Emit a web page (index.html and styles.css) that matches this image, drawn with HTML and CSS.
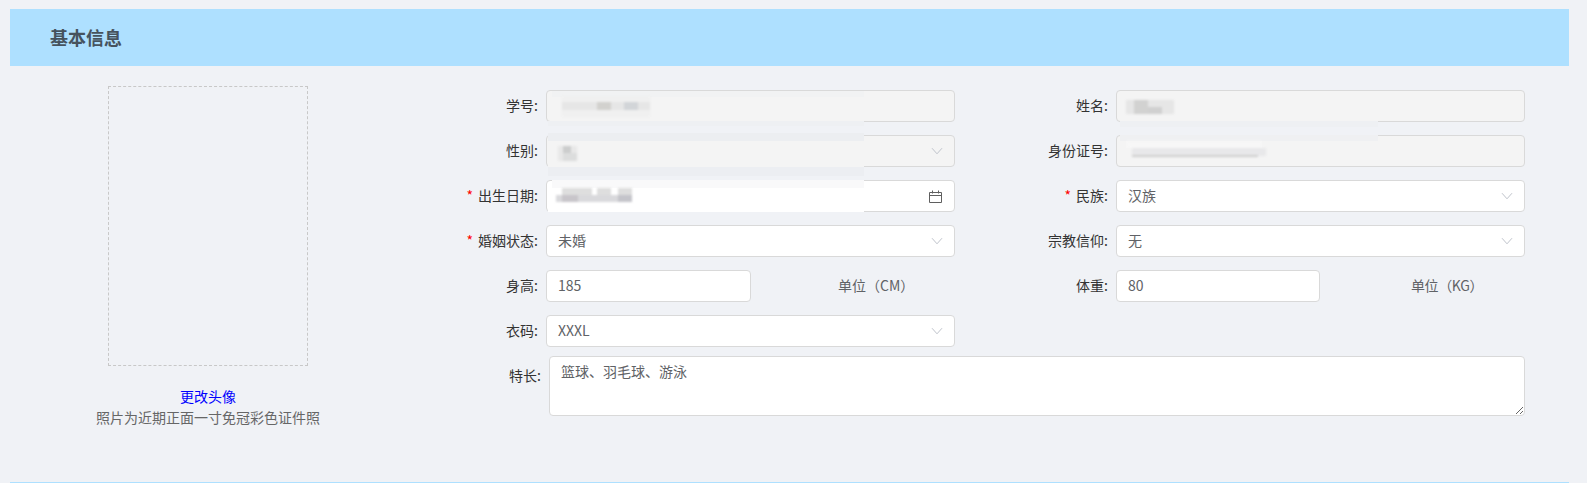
FILE: index.html
```html
<!DOCTYPE html>
<html lang="zh-CN">
<head>
<meta charset="utf-8">
<title>基本信息</title>
<link rel="stylesheet" href="styles.css">
</head>
<body>
<section class="panel">
  <h2 class="panel-title">基本信息</h2>
  <div class="panel-body">
    <aside class="photo-col">
      <div class="photo-box"></div>
      <a class="photo-link">更改头像</a>
      <p class="photo-note">照片为近期正面一寸免冠彩色证件照</p>
    </aside>
    <form class="form">
      <div class="row">
        <div class="field"><label class="label">学号:</label><div class="control disabled"></div></div>
        <div class="field"><label class="label">姓名:</label><div class="control disabled"></div></div>
      </div>
      <div class="row">
        <div class="field"><label class="label">性别:</label><div class="control disabled"><svg class="chev" viewBox="0 0 12 8"><path d="M1 1.2 6 6.8 11 1.2"/></svg></div></div>
        <div class="field"><label class="label">身份证号:</label><div class="control disabled"></div></div>
      </div>
      <div class="row">
        <div class="field"><label class="label"><span class="req">*</span>出生日期:</label><div class="control"><svg class="cal" viewBox="0 0 13 13"><path d="M.5 2.5h12v10H.5zM.5 5.5h12M3.5.5v3M9.5.5v3"/></svg></div></div>
        <div class="field"><label class="label"><span class="req">*</span>民族:</label><div class="control"><span class="value">汉族</span><svg class="chev" viewBox="0 0 12 8"><path d="M1 1.2 6 6.8 11 1.2"/></svg></div></div>
      </div>
      <div class="row">
        <div class="field"><label class="label"><span class="req">*</span>婚姻状态:</label><div class="control"><span class="value">未婚</span><svg class="chev" viewBox="0 0 12 8"><path d="M1 1.2 6 6.8 11 1.2"/></svg></div></div>
        <div class="field"><label class="label">宗教信仰:</label><div class="control"><span class="value">无</span><svg class="chev" viewBox="0 0 12 8"><path d="M1 1.2 6 6.8 11 1.2"/></svg></div></div>
      </div>
      <div class="row">
        <div class="field"><label class="label">身高:</label><div class="control short"><span class="value">185</span></div><span class="unit unit-cm">单位（CM）</span></div>
        <div class="field"><label class="label">体重:</label><div class="control short short-r"><span class="value">80</span></div><span class="unit unit-kg">单位（KG）</span></div>
      </div>
      <div class="row">
        <div class="field"><label class="label">衣码:</label><div class="control"><span class="value">XXXL</span><svg class="chev" viewBox="0 0 12 8"><path d="M1 1.2 6 6.8 11 1.2"/></svg></div></div>
      </div>
      <div class="row-area">
        <label class="label area-label">特长:</label>
        <textarea class="area" readonly>篮球、羽毛球、游泳</textarea>
      </div>
    </form>
  </div>
</section>

<svg class="smear" width="1587" height="483" viewBox="0 0 1587 483" aria-hidden="true">
  <g>
    <rect x="552" y="91" width="312" height="6" fill="#f1f2f3"/>
    <rect x="548" y="121" width="316" height="5" fill="#eef0f3"/>
    <rect x="548" y="133" width="316" height="8" fill="#eceef1"/>
    <rect x="548" y="141" width="316" height="26" fill="#f4f4f4"/>
    <rect x="548" y="167" width="316" height="9" fill="#eceef2"/>
    <rect x="552" y="180" width="312" height="8" fill="#f9f9fa"/>
    <rect x="548" y="188" width="316" height="24" fill="#fff"/>
    <rect x="552" y="212" width="312" height="3" fill="#f0f2f6"/>
    <rect x="1120" y="121" width="258" height="6" fill="#eef0f3"/>
    <rect x="1120" y="135" width="258" height="6" fill="#eff0f2"/>
  </g>
  <g class="mosaic">
    <rect x="562" y="96" width="88" height="21" fill="#f0f0f0"/>
    <rect x="562" y="102" width="88" height="8" fill="#e6e6e6"/>
    <rect x="597" y="102" width="14" height="8" fill="#d2d1ce"/>
    <rect x="624" y="102" width="14" height="8" fill="#d2d5d8"/>
    <rect x="558" y="146" width="19" height="15" fill="#e8e8e8"/>
    <rect x="563" y="146" width="8" height="7" fill="#cccdcd"/>
    <rect x="563" y="153" width="14" height="8" fill="#dcdddd"/>
    <rect x="562" y="188" width="30" height="7" fill="#dedede"/>
    <rect x="597" y="188" width="14" height="7" fill="#dedede"/>
    <rect x="618" y="188" width="14" height="7" fill="#dedede"/>
    <rect x="556" y="195" width="76" height="7" fill="#d9d9dc"/>
    <rect x="562" y="195" width="16" height="7" fill="#c8c5ca"/>
    <rect x="618" y="195" width="14" height="7" fill="#c4c4ca"/>
    <rect x="1126" y="100" width="48" height="14" fill="#e6e6e6"/>
    <rect x="1134" y="100" width="14" height="14" fill="#d2d2d1"/>
    <rect x="1148" y="107" width="14" height="7" fill="#d0d0d0"/>
    <rect x="1126" y="141" width="136" height="7" fill="#f7f7f7"/>
    <rect x="1132" y="148" width="134" height="8" fill="#e8e8ea"/>
    <rect x="1132" y="155" width="126" height="2" fill="#d0d0d0"/>
  </g>
</svg>
</body>
</html>
```
FILE: styles.css
```css
* { box-sizing: border-box; }
html, body { margin: 0; height: 100%; }
body {
  position: relative;
  height: 483px;
  overflow: hidden;
  padding: 9px 18px 0 10px;
  background: #f0f2f6;
  font-family: "Noto Sans CJK SC", "Liberation Sans", sans-serif;
  font-size: 14px;
  color: #333;
}
.panel {
  height: 474px;
  border-bottom: 1px solid #aee0ff;
}
.panel-title {
  margin: 0;
  height: 57px;
  padding-left: 40px;
  background: #aee0ff;
  font-size: 18px;
  font-weight: 700;
  line-height: 56px;
  color: #46535e;
}
.panel-body { display: flex; }
.photo-col {
  width: 396px;
  padding-top: 20px;
  display: flex;
  flex-direction: column;
  align-items: center;
}
.photo-box {
  width: 200px;
  height: 280px;
  border: 1px dashed #c8c8c8;
}
.photo-link {
  margin-top: 20px;
  line-height: 21px;
  color: #0000ff;
}
.photo-note {
  margin: 0;
  line-height: 21px;
  color: #666;
}
.form {
  width: 1119px;
  padding-top: 24px;
}
.row {
  display: flex;
  gap: 21px;
  height: 45px;
}
.field {
  display: flex;
  width: 549px;
  height: 32px;
}
.label {
  flex: none;
  width: 140px;
  padding-right: 8px;
  text-align: right;
  line-height: 30px;
  color: #333;
}
.req { color: #f00; margin-right: 5px; }
.control {
  position: relative;
  flex: none;
  display: flex;
  align-items: center;
  width: 409px;
  height: 32px;
  padding: 0 11px 2px;
  background: #fff;
  border: 1px solid #d9d9d9;
  border-radius: 4px;
}
.control.disabled { background: #f4f4f4; }
.control.short { width: 205px; }
.control.short-r { width: 204px; }
.value { color: #606266; }
.chev {
  position: absolute;
  right: 11px;
  top: 11px;
  width: 12px;
  height: 8px;
  fill: none;
  stroke: #c0c4cc;
  stroke-width: 1;
}
.cal {
  position: absolute;
  right: 12px;
  top: 9px;
  width: 13px;
  height: 13px;
  fill: none;
  stroke: #5f5f5f;
  stroke-width: 1;
}
.unit {
  line-height: 30px;
  color: #606266;
}
.unit-cm { margin-left: 87px; }
.unit-kg { margin-left: 91px; letter-spacing: -.4px; }
.row-area {
  display: flex;
  margin-top: -4px;
}
.area-label {
  flex: none;
  width: 143px;
  padding-top: 4px;
  line-height: 30px;
}
.area {
  display: block;
  flex: none;
  width: 976px;
  height: 60px;
  padding: 4px 11px;
  border: 1px solid #d9d9d9;
  border-radius: 4px;
  background: #fff;
  font: inherit;
  line-height: 21px;
  color: #606266;
  outline: none;
}
.smear {
  position: absolute;
  left: 0;
  top: 0;
  pointer-events: none;
}
.mosaic { filter: blur(.8px); }
```
